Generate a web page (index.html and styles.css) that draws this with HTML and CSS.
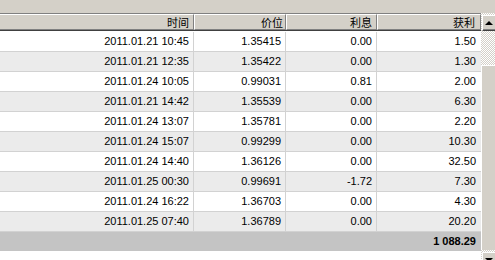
FILE: index.html
```html
<!DOCTYPE html>
<html>
<head>
<meta charset="utf-8">
<link rel="stylesheet" href="styles.css">
</head>
<body>
<div class="toolbar"></div>
<div class="main">
  <div class="grid">
    <div class="head">
      <div class="hcell">时间</div>
      <div class="hcell">价位</div>
      <div class="hcell">利息</div>
      <div class="hcell">获利</div>
    </div>
    <div class="body">
      <div class="row"><div class="cell">2011.01.21 10:45</div><div class="cell">1.35415</div><div class="cell">0.00</div><div class="cell">1.50</div></div>
      <div class="row alt"><div class="cell">2011.01.21 12:35</div><div class="cell">1.35422</div><div class="cell">0.00</div><div class="cell">1.30</div></div>
      <div class="row"><div class="cell">2011.01.24 10:05</div><div class="cell">0.99031</div><div class="cell">0.81</div><div class="cell">2.00</div></div>
      <div class="row alt"><div class="cell">2011.01.21 14:42</div><div class="cell">1.35539</div><div class="cell">0.00</div><div class="cell">6.30</div></div>
      <div class="row"><div class="cell">2011.01.24 13:07</div><div class="cell">1.35781</div><div class="cell">0.00</div><div class="cell">2.20</div></div>
      <div class="row alt"><div class="cell">2011.01.24 15:07</div><div class="cell">0.99299</div><div class="cell">0.00</div><div class="cell">10.30</div></div>
      <div class="row"><div class="cell">2011.01.24 14:40</div><div class="cell">1.36126</div><div class="cell">0.00</div><div class="cell">32.50</div></div>
      <div class="row alt"><div class="cell">2011.01.25 00:30</div><div class="cell">0.99691</div><div class="cell">-1.72</div><div class="cell">7.30</div></div>
      <div class="row"><div class="cell">2011.01.24 16:22</div><div class="cell">1.36703</div><div class="cell">0.00</div><div class="cell">4.30</div></div>
      <div class="row alt"><div class="cell">2011.01.25 07:40</div><div class="cell">1.36789</div><div class="cell">0.00</div><div class="cell">20.20</div></div>
      <div class="total">1 088.29</div>
    </div>
  </div>
  <div class="scrollbar">
    <div class="sbtn up"><span class="tri-up"></span></div>
    <div class="track-gap"></div>
    <div class="thumb"></div>
    <div class="sbtn down"><span class="tri-down"></span></div>
  </div>
</div>
</body>
</html>
```

FILE: styles.css
```css
html, body {
  margin: 0;
  padding: 0;
  background: #ffffff;
  overflow: hidden;
  width: 495px;
  height: 260px;
}
body {
  font-family: "Liberation Sans", Arial, "Noto Sans CJK SC", sans-serif;
  font-size: 11px;
  color: #000;
}
.toolbar {
  height: 13px;
  background: #d4d0c8;
}
.main {
  display: flex;
  align-items: flex-start;
}
.grid {
  width: 481px;
  flex: none;
}
.head {
  display: grid;
  grid-template-columns: 194px 92px 91px 104px;
  height: 18px;
  box-sizing: border-box;
  border-top: 1px solid #808080;
  border-bottom: 1px solid #404040;
  background: #d4d0c8;
}
.hcell {
  box-sizing: border-box;
  border-top: 1px solid #ffffff;
  border-bottom: 1px solid #808080;
  border-right: 1px solid #808080;
  border-left: 1px solid #ffffff;
  text-align: right;
  padding-right: 4px;
  font-family: "Noto Sans CJK SC", sans-serif;
  font-size: 11px;
  line-height: 14px;
}
.hcell:first-child {
  border-left: none;
}
.hcell:nth-child(2) {
  padding-right: 2px;
}
.hcell:last-child {
  border-right: 1px solid #808080;
  padding-right: 5px;
}
.body {
  padding-top: 1px;
}
.row {
  display: grid;
  grid-template-columns: 194px 92px 91px 104px;
  height: 20px;
  box-sizing: border-box;
  border-bottom: 1px solid #d2d2d2;
  background: #ffffff;
}
.row.alt {
  background: #ebebeb;
}
.cell {
  box-sizing: border-box;
  border-right: 1px solid #d2d2d2;
  text-align: right;
  padding-right: 4px;
  line-height: 19px;
  white-space: nowrap;
}
.cell:last-child {
  border-right: none;
  padding-right: 5px;
}
.total {
  height: 19px;
  background: #c4c4c4;
  text-align: right;
  padding-right: 5px;
  font-weight: bold;
  line-height: 19px;
}
.scrollbar {
  flex: none;
  width: 16px;
  height: 247px;
  background: repeating-conic-gradient(#d4d0c8 0 25%, #ffffff 0 50%) 0 0 / 2px 2px;
  display: flex;
  flex-direction: column;
  padding-top: 2px;
  box-sizing: border-box;
}
.sbtn {
  flex: none;
  width: 16px;
  height: 16px;
  box-sizing: border-box;
  background: #d4d0c8;
  border-top: 1px solid #ffffff;
  border-left: 1px solid #ffffff;
  border-right: 1px solid #404040;
  border-bottom: 1px solid #404040;
  box-shadow: inset -1px -1px 0 #808080;
  display: flex;
  align-items: center;
  justify-content: center;
  margin-left: 1px;
}
.track-gap {
  height: 34px;
  flex: none;
}
.thumb {
  flex: none;
  height: 185px;
  background: #d4d0c8;
  border-top: 1px solid #ffffff;
  border-left: 1px solid #ffffff;
  box-sizing: border-box;
}
.sbtn.down {
  margin-top: 2px;
}
.tri-up {
  width: 0;
  height: 0;
  border-left: 4px solid transparent;
  border-right: 4px solid transparent;
  border-bottom: 4px solid #000;
  margin-right: 2px;
  margin-bottom: 1px;
}
.tri-down {
  width: 0;
  height: 0;
  border-left: 4px solid transparent;
  border-right: 4px solid transparent;
  border-top: 4px solid #000;
  margin-right: 2px;
}
```
